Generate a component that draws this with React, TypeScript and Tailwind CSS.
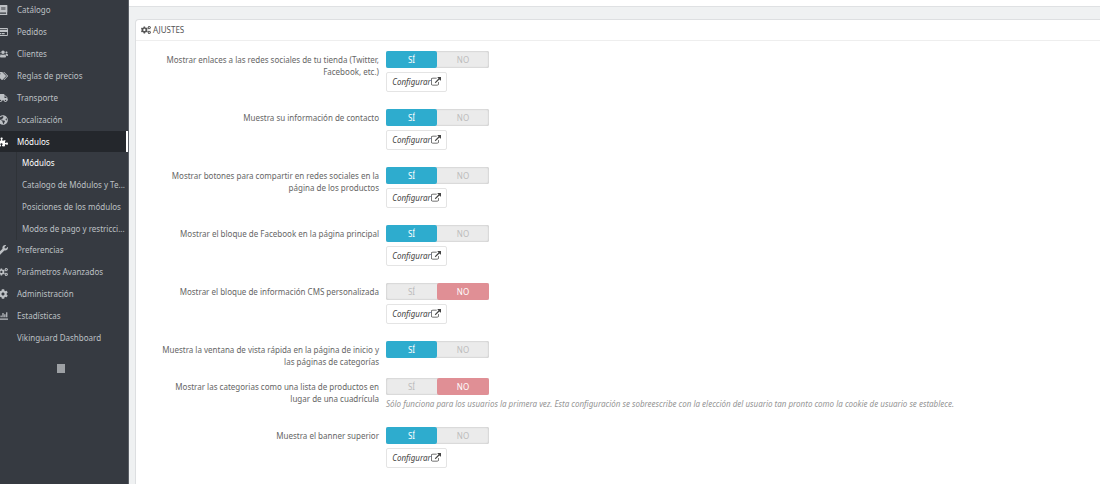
import React, { useState } from 'react';
import type { IconType } from 'react-icons';
import {
  FaBook,
  FaChartBar,
  FaCog,
  FaCogs,
  FaGlobeAmericas,
  FaPuzzlePiece,
  FaRegCreditCard,
  FaTags,
  FaTruck,
  FaUsers,
  FaWrench,
} from 'react-icons/fa';

interface MenuEntry {
  label: string;
  icon?: IconType;
  children?: string[];
}

interface Setting {
  id: string;
  label: string;
  enabled: boolean;
  configurable?: boolean;
  help?: string;
}

const MENU: MenuEntry[] = [
  { label: 'Catálogo', icon: FaBook },
  { label: 'Pedidos', icon: FaRegCreditCard },
  { label: 'Clientes', icon: FaUsers },
  { label: 'Reglas de precios', icon: FaTags },
  { label: 'Transporte', icon: FaTruck },
  { label: 'Localización', icon: FaGlobeAmericas },
  {
    label: 'Módulos',
    icon: FaPuzzlePiece,
    children: [
      'Módulos',
      'Catalogo de Módulos y Te...',
      'Posiciones de los módulos',
      'Modos de pago y restricci...',
    ],
  },
  { label: 'Preferencias', icon: FaWrench },
  { label: 'Parámetros Avanzados', icon: FaCogs },
  { label: 'Administración', icon: FaCog },
  { label: 'Estadísticas', icon: FaChartBar },
  { label: 'Vikinguard Dashboard' },
];

const SETTINGS: Setting[] = [
  {
    id: 'social-links',
    label: 'Mostrar enlaces a las redes sociales de tu tienda (Twitter, Facebook, etc.)',
    enabled: true,
    configurable: true,
  },
  { id: 'contact', label: 'Muestra su información de contacto', enabled: true, configurable: true },
  {
    id: 'sharing',
    label: 'Mostrar botones para compartir en redes sociales en la página de los productos',
    enabled: true,
    configurable: true,
  },
  { id: 'facebook', label: 'Mostrar el bloque de Facebook en la página principal', enabled: true, configurable: true },
  { id: 'cms', label: 'Mostrar el bloque de información CMS personalizada', enabled: false, configurable: true },
  {
    id: 'quick-view',
    label: 'Muestra la ventana de vista rápida en la página de inicio y las páginas de categorías',
    enabled: true,
  },
  {
    id: 'list-view',
    label: 'Mostrar las categorias como una lista de productos en lugar de una cuadrícula',
    enabled: false,
    help: 'Sólo funciona para los usuarios la primera vez. Esta configuración se sobreescribe con la elección del usuario tan pronto como la cookie de usuario se establece.',
  },
  { id: 'banner', label: 'Muestra el banner superior', enabled: true, configurable: true },
];

const ExternalLinkIcon: React.FC = () => (
  <svg viewBox="0 0 1792 1792" className="size-[10px] shrink-0" fill="currentColor" aria-hidden="true">
    <path d="M1408 928v320q0 119-84.5 203.5t-203.5 84.5h-832q-119 0-203.5-84.5t-84.5-203.5v-832q0-119 84.5-203.5t203.5-84.5h704q14 0 23 9t9 23v64q0 14-9 23t-23 9h-704q-66 0-113 47t-47 113v832q0 66 47 113t113 47h832q66 0 113-47t47-113v-320q0-14 9-23t23-9h64q14 0 23 9t9 23zm384-864v512q0 26-19 45t-45 19-45-19l-176-176-652 652q-10 10-23 10t-23-10l-114-114q-10-10-10-23t10-23l652-652-176-176q-19-19-19-45t19-45 45-19h512q26 0 45 19t19 45z" />
  </svg>
);

const Sidebar: React.FC = () => (
  <aside className="w-[129px] shrink-0 overflow-hidden border-r border-[#5b5f66] bg-[#363a41] text-[#bdc0c4]">
    <nav className="-mt-px -ml-1">
      <ul>
        {MENU.map(({ label, icon: Icon, children }) => (
          <li key={label}>
            <a
              href="#"
              className={
                children
                  ? 'flex h-[21px] items-center border-r-2 border-white bg-[#24272c] text-white'
                  : 'flex h-[22px] items-center'
              }
            >
              <span className="mr-[9px] flex w-[12px] shrink-0 justify-end">
                {Icon && <Icon className="h-[10px] w-auto shrink-0" />}
              </span>
              {label}
            </a>
            {children && (
              <ul className="-mb-px ml-[20px] border-l border-[#2f3338]">
                {children.map((child, index) => (
                  <li key={child}>
                    <a
                      href="#"
                      className={
                        index === 0
                          ? 'flex h-[22px] items-center pl-[5px] whitespace-nowrap text-white'
                          : 'flex h-[22px] items-center pl-[5px] whitespace-nowrap'
                      }
                    >
                      {child}
                    </a>
                  </li>
                ))}
              </ul>
            )}
          </li>
        ))}
      </ul>
    </nav>
    <button type="button" aria-label="Contraer menú" className="mt-[15px] ml-[57px] block h-[9px] w-[8px] bg-[#9da0a4]" />
  </aside>
);

interface SwitchProps {
  id: string;
  label: string;
  value: boolean;
  onChange: (value: boolean) => void;
}

const Switch: React.FC<SwitchProps> = ({ id, label, value, onChange }) => (
  <fieldset
    aria-label={label}
    className="flex h-[17px] w-[103px] rounded-xs bg-[#ebebeb] text-center leading-[18px] text-[#bbbbbb] uppercase inset-shadow-[0_0_2px_#aaaaaa]"
  >
    <label
      className={value ? 'relative w-[51px] rounded-xs bg-[#2eacce] text-white' : 'relative w-[51px]'}
    >
      <input
        type="radio"
        name={id}
        checked={value}
        onChange={() => onChange(true)}
        className="absolute inset-0 size-full cursor-pointer appearance-none"
      />
      Sí
    </label>
    <label
      className={value ? 'relative w-[52px]' : 'relative w-[52px] rounded-xs bg-[#e08f95] text-white'}
    >
      <input
        type="radio"
        name={id}
        checked={!value}
        onChange={() => onChange(false)}
        className="absolute inset-0 size-full cursor-pointer appearance-none"
      />
      No
    </label>
  </fieldset>
);

const SettingRow: React.FC<{ setting: Setting }> = ({ setting }) => {
  const [value, setValue] = useState<boolean>(setting.enabled);

  return (
    <div className="mb-[10px] grid grid-cols-[1fr_3fr] gap-[7px]">
      <p className="pt-[3px] pl-[14px] text-right">{setting.label}</p>
      <div>
        <Switch id={setting.id} label={setting.label} value={value} onChange={setValue} />
        {setting.configurable && (
          <a
            href="#"
            className="mt-[4px] mb-[7px] flex h-[20px] w-[61px] items-center justify-center rounded-xs border border-[#e4e4e4] text-[#444444] italic"
          >
            Configurar
            <ExternalLinkIcon />
          </a>
        )}
        {setting.help && <p className="mt-[3px] mb-[7px] text-[#959595] italic">{setting.help}</p>}
      </div>
    </div>
  );
};

const App: React.FC = () => {
  return (
    <div className="flex h-screen overflow-hidden bg-[#eff1f2] font-['Noto_Sans',sans-serif] text-[8px] leading-[12px] text-[#666666]">
      <Sidebar />
      <main className="flex min-w-0 flex-1 flex-col">
        <div className="h-[7px] shrink-0 border-b border-[#dfe1e3] bg-white" />
        <section className="mt-[12px] ml-[6px] flex-1 rounded-tl-sm border-t border-l border-[#dddfe1] bg-white">
          <h3 className="flex h-[21px] items-center gap-[2px] border-b border-[#eeeeee] pl-[5px] text-[#555555] uppercase">
            <FaCogs className="size-[10px]" />
            Ajustes
          </h3>
          <form className="pt-[10px] pl-[5px]">
            {SETTINGS.map((setting) => (
              <SettingRow key={setting.id} setting={setting} />
            ))}
          </form>
        </section>
      </main>
    </div>
  );
};

export default App;
